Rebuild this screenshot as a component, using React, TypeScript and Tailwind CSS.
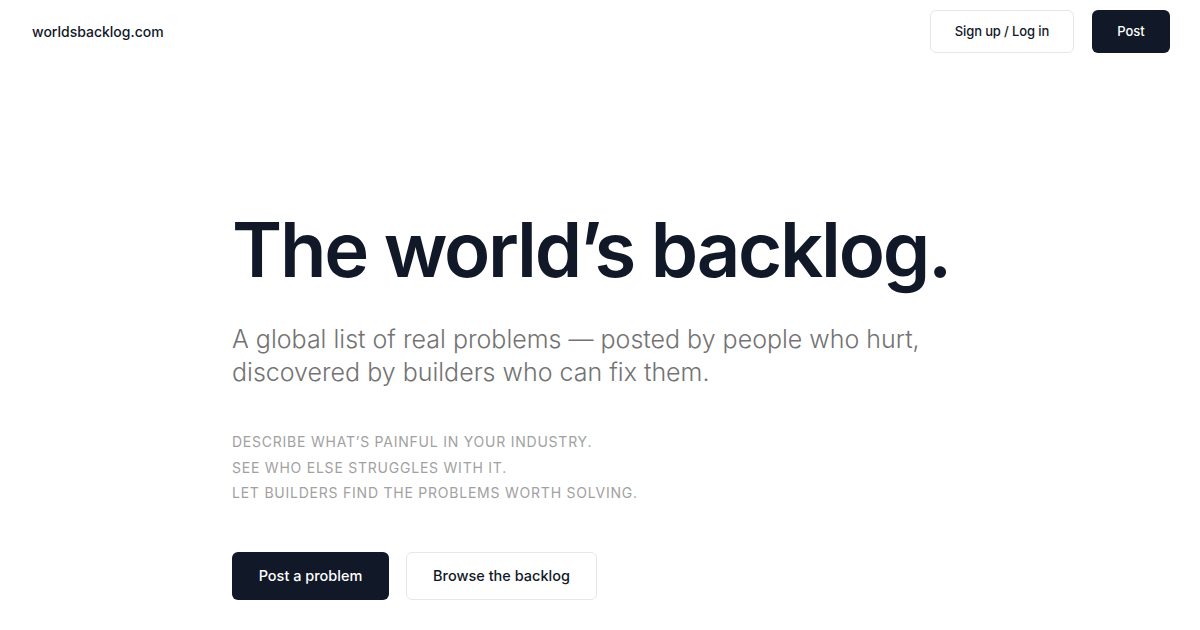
const LINES = [
  'Describe what’s painful in your industry.',
  'See who else struggles with it.',
  'Let builders find the problems worth solving.',
]

export default function App() {
  return (
    <div className="min-h-screen bg-white text-[#111827]" style={{ fontFamily: 'Inter, "Noto Sans", sans-serif' }}>
      <header className="flex h-[63px] items-center justify-between pl-8 pr-[30px]">
        <a className="text-sm font-medium text-[#111827]">worldsbacklog.com</a>
        <nav className="flex items-center gap-[18px]">
          <button className="h-[43px] w-[144px] rounded-md border border-gray-200 bg-white text-[13px] font-medium tracking-[-0.01em] text-[#111827]">
            Sign up / Log in
          </button>
          <button className="h-[43px] w-[78px] rounded-md bg-[#111827] text-[13px] font-medium text-white">
            Post
          </button>
        </nav>
      </header>

      <main className="pl-[232px] pt-[148px]">
        <h1 className="text-[76px] font-semibold leading-none tracking-[-0.03em] text-[#111827]">
          The world’s backlog.
        </h1>
        <p className="mt-[36px] text-[25px] font-light leading-[33px] text-neutral-500">
          A global list of real problems — posted by people who hurt,
          <br />
          discovered by builders who can fix them.
        </p>
        <ul className="mt-[40px] flex flex-col text-[14px] uppercase leading-[25.5px] tracking-[0.055em] text-neutral-400">
          {LINES.map((l) => (
            <li key={l}>{l}</li>
          ))}
        </ul>
        <div className="mt-[46px] flex items-center gap-[17px]">
          <button className="h-[48px] w-[157px] rounded-md bg-[#111827] text-[14.5px] font-medium text-white">
            Post a problem
          </button>
          <button className="h-[48px] w-[191px] rounded-md border border-gray-200 bg-white text-[14.5px] font-medium text-[#111827]">
            Browse the backlog
          </button>
        </div>
      </main>
    </div>
  )
}
